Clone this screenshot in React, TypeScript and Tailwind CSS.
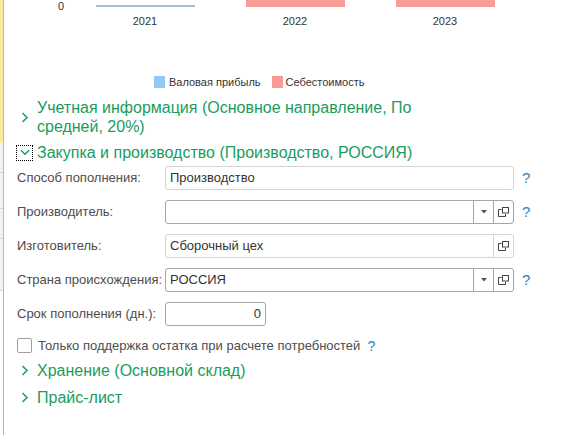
import React from "react";

const GREEN = "text-[#1a9c5b]";

function ChevronRight() {
  return (
    <svg width="8" height="11" viewBox="0 0 8 11" className="block">
      <path d="M1.5 1 L6 5.5 L1.5 10" fill="none" stroke="#1a9c5b" strokeWidth="1.5" />
    </svg>
  );
}

function ChevronDown() {
  return (
    <svg width="10" height="7" viewBox="0 0 10 7" className="block">
      <path d="M1 1.2 L5 5.2 L9 1.2" fill="none" stroke="#1a9c5b" strokeWidth="1.5" />
    </svg>
  );
}

function OpenIcon() {
  return (
    <svg width="11" height="10" viewBox="0 0 11 10" className="block">
      <rect x="4.5" y="0.5" width="6" height="5.5" fill="none" stroke="#444" strokeWidth="1" />
      <path d="M3.5 2.5 H0.5 V9.5 H7.5 V7" fill="none" stroke="#444" strokeWidth="1" />
    </svg>
  );
}

function DropIcon() {
  return (
    <svg width="6" height="4" viewBox="0 0 6 4" className="block">
      <path d="M0 0 H6 L3 3.5 Z" fill="#555" />
    </svg>
  );
}

function Help({ size = "text-[15px]" }: { size?: string }) {
  return <span className={`${size} leading-none text-[#2b7fc6]`}>?</span>;
}

function GroupHeader({ title, wrapWidth }: { title: string; wrapWidth?: string }) {
  return (
    <div className="flex items-center">
      <div className="ml-[12px] w-[17px] h-[16px] flex items-center justify-center shrink-0">
        <ChevronRight />
      </div>
      <div className={`ml-[4px] text-[16px] leading-[19px] ${GREEN} ${wrapWidth ?? ""}`}>{title}</div>
    </div>
  );
}

type FieldProps = {
  label: string;
  value?: string;
  dropdown?: boolean;
  open?: boolean;
  dark?: boolean;
  help?: boolean;
  first?: boolean;
};

function Field({ label, value, dropdown, open, dark, help, first }: FieldProps) {
  const border = dark ? "border-[#a6a6a6]" : "border-[#d4d4d4]";
  return (
    <div className={`flex items-center h-[24px] ${first ? "mt-[4px]" : "mt-[10px]"}`}>
      <div className="ml-[13px] w-[148px] shrink-0 text-[13px] text-[#4d4d4d] whitespace-nowrap">{label}</div>
      <div className={`w-[349px] h-[24px] shrink-0 flex border ${border} rounded-[3px] bg-white`}>
        <div className="flex-1 flex items-center pl-[4px] text-[13px] text-[#333]">{value}</div>
        {dropdown && (
          <div className={`w-[20px] flex items-center justify-center border-l ${border}`}>
            <DropIcon />
          </div>
        )}
        {open && (
          <div className={`w-[20px] flex items-center justify-center border-l ${border}`}>
            <OpenIcon />
          </div>
        )}
      </div>
      {help && (
        <div className="ml-[8px]">
          <Help />
        </div>
      )}
    </div>
  );
}

export default function App() {
  return (
    <div className="flex w-[578px] h-[435px] overflow-hidden bg-white font-['Liberation_Sans',Arial,sans-serif]">
      {/* left strip */}
      <div className="flex flex-col w-[4px] shrink-0 border-r border-[#c2ba8c]">
        <div className="h-[143px] bg-[#fbe99c] shrink-0" />
        <div className="h-[29px] bg-[#f2f2f2] shrink-0" />
        <div className="h-[36px] bg-[#f2f2f2] border-t border-[#d6d6d6] shrink-0" />
        <div className="h-[30px] bg-[#f2f2f2] border-t border-[#d6d6d6] shrink-0" />
        <div className="h-[52px] bg-[#f2f2f2] border-t border-[#d6d6d6] shrink-0" />
        <div className="flex-1 bg-white border-t border-[#d6d6d6]" />
      </div>

      {/* content */}
      <div className="flex-1 flex flex-col">
        {/* chart */}
        <div className="grid grid-cols-[66px_150px_150px_150px]">
          <div className="h-[7px] pr-[6px] text-right text-[11px] leading-[13px] text-[#333]">0</div>
          <div className="h-[7px] flex items-end justify-center">
            <div className="w-[99px] h-[2px] bg-[#a9b7e4]" />
          </div>
          <div className="h-[7px] flex justify-center">
            <div className="w-[99px] h-[7px] bg-[#f79b96]" />
          </div>
          <div className="h-[7px] flex justify-center">
            <div className="w-[99px] h-[7px] bg-[#f79b96]" />
          </div>
          <div />
          <div className="mt-[8px] text-center text-[11px] leading-[13px] text-[#333]">2021</div>
          <div className="mt-[8px] text-center text-[11px] leading-[13px] text-[#333]">2022</div>
          <div className="mt-[8px] text-center text-[11px] leading-[13px] text-[#333]">2023</div>
        </div>

        {/* legend */}
        <div className="mt-[48px] pl-[150px] flex items-center h-[12px] text-[11px] text-[#333]">
          <div className="w-[11px] h-[12px] bg-[#92c9f8]" />
          <span className="ml-[4px]">Валовая прибыль</span>
          <div className="ml-[11px] w-[11px] h-[12px] bg-[#f79b96]" />
          <span className="ml-[3px]">Себестоимость</span>
        </div>

        {/* group 1 */}
        <div className="mt-[10px]">
          <GroupHeader title="Учетная информация (Основное направление, По средней, 20%)" wrapWidth="w-[390px]" />
        </div>

        {/* group 2 (expanded) */}
        <div className="mt-[7px] flex items-center">
          <div className="ml-[12px] w-[17px] h-[16px] flex items-center justify-center shrink-0 border border-dotted border-black">
            <ChevronDown />
          </div>
          <div className={`ml-[4px] text-[16px] leading-[19px] ${GREEN} whitespace-nowrap`}>
            Закупка и производство (Производство, РОССИЯ)
          </div>
        </div>

        <Field first label="Способ пополнения:" value="Производство" help />
        <Field label="Производитель:" dropdown open dark help />
        <Field label="Изготовитель:" value="Сборочный цех" open />
        <Field label="Страна происхождения:" value="РОССИЯ" dropdown open dark help />

        <div className="flex items-center h-[24px] mt-[10px]">
          <div className="ml-[13px] w-[148px] shrink-0 text-[13px] text-[#4d4d4d] whitespace-nowrap">
            Срок пополнения (дн.):
          </div>
          <div className="w-[101px] h-[24px] flex items-center justify-end pr-[4px] border border-[#a6a6a6] rounded-[3px] text-[13px] text-[#333]">
            0
          </div>
        </div>

        <div className="flex items-center mt-[12px] h-[15px]">
          <div className="ml-[13px] w-[15px] h-[15px] shrink-0 border border-[#a0a0a0] rounded-[2px] bg-white" />
          <span className="ml-[6px] text-[13px] text-[#4d4d4d] whitespace-nowrap">
            Только поддержка остатка при расчете потребностей
          </span>
          <span className="ml-[7px]">
            <Help size="text-[14px]" />
          </span>
        </div>

        <div className="mt-[8px]">
          <GroupHeader title="Хранение (Основной склад)" />
        </div>
        <div className="mt-[8px]">
          <GroupHeader title="Прайс-лист" />
        </div>
      </div>
    </div>
  );
}
